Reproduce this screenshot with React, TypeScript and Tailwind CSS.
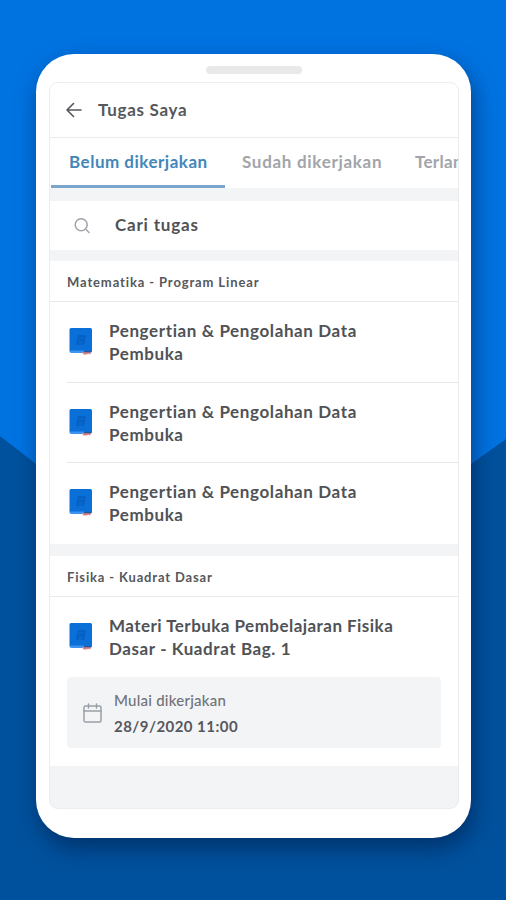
import React from "react";

type TaskProps = {
  title: string;
  subtitle: string;
  titleClass: string;
  subtitleClass: string;
};

const BookIcon: React.FC = () => (
  <svg className="h-[29px] w-6 shrink-0" viewBox="0 0 24 29" fill="none">
    <rect x="0.5" y="1" width="22.5" height="24.5" rx="1.5" fill="#0b6fd8" />
    <path d="M1 23.5h14v2.5H3a2 2 0 0 1-2-2z" fill="#3b95f0" />
    <path d="M8 9h9l-2 9H7z" fill="#0867cd" />
    <path d="M9 9h7l-1 4h-6M8 18l1-5M14 18l1-5" stroke="#075fc0" strokeWidth="1.4" />
    <path d="M13 25h8.5v2.5l-2-.7-2 .7h-3z" fill="#d68484" />
    <path d="M15 24h7v1.3h-7z" fill="#2a5599" />
  </svg>
);

const Task: React.FC<TaskProps> = ({ title, subtitle, titleClass, subtitleClass }) => (
  <div className="flex pl-[19px]">
    <div className="pt-2">
      <BookIcon />
    </div>
    <div className="ml-4 text-[17px] leading-[23px] font-bold whitespace-nowrap text-[#505256]">
      <p className={titleClass}>{title}</p>
      <p className={subtitleClass}>{subtitle}</p>
    </div>
  </div>
);

const SectionTitle: React.FC<{ children: React.ReactNode; className: string }> = ({ children, className }) => (
  <h2 className="flex h-[41px] items-center border-b border-[#e9eaec] pt-[3px] pl-[17px] text-[13px] font-bold whitespace-nowrap text-[#56585c]">
    <span className={className}>{children}</span>
  </h2>
);

const Backdrop: React.FC = () => (
  <svg className="absolute inset-0 h-[900px] w-[506px]" viewBox="0 0 506 900">
    <rect width="506" height="900" fill="#0073e1" />
    <path d="M0 436L36 464L253 620L471 464L506 439V900H0z" fill="#00519d" />
  </svg>
);

const App: React.FC = () => {
  const tasks = [1, 2, 3];

  return (
    <div className="relative h-[900px] w-[506px] overflow-hidden font-['Lato','Open_Sans',sans-serif]">
      <Backdrop />
      <div className="relative mt-[54px] ml-9 h-[784px] w-[435px] rounded-[38px] bg-white pt-3 shadow-[3px_10px_22px_rgba(0,20,60,0.5)]">
        <div className="mx-auto h-2 w-24 rounded-sm bg-[#e9e9e9]" />
        <div className="mt-2 ml-[13px] h-[727px] w-[410px] overflow-hidden rounded-[9px] border border-[#ececee] bg-[#f3f4f6]">
          <header className="flex h-[55px] items-center border-b border-[#ececee] bg-white pl-4">
            <svg className="h-4 w-4" viewBox="0 0 16 16" fill="none" stroke="#55575b" strokeWidth="1.6" strokeLinecap="round" strokeLinejoin="round">
              <path d="M15 8H1M7.5 1.5L1 8L7.5 14.5" />
            </svg>
            <h1 className="ml-4 text-[17px] font-bold tracking-[0.7px] text-[#56585c]">Tugas Saya</h1>
          </header>

          <nav className="flex h-[50px] bg-white text-[17px] font-bold whitespace-nowrap">
            <div className="ml-px w-[174px] shrink-0 border-b-[3px] border-[#7ba5ce] pt-[11px] pl-[18px] text-[#4286ba]">
              <span className="tracking-[0.5px]">Belum dikerjakan</span>
            </div>
            <div className="w-[173px] shrink-0 pt-[11px] pl-[17px] text-[#a1a5aa]">
              <span className="tracking-[0.7px]">Sudah dikerjakan</span>
            </div>
            <div className="shrink-0 pt-[11px] pl-[17px] text-[#a1a5aa]">
              <span className="tracking-[0.3px]">Terlambat</span>
            </div>
          </nav>

          <div className="mt-[13px] flex h-[49px] items-center bg-white pl-6">
            <svg className="h-4 w-4" viewBox="0 0 16 16" fill="none" stroke="#a3a7ad" strokeWidth="1.6" strokeLinecap="round">
              <circle cx="7.2" cy="6.7" r="6" />
              <path d="M12 11.5L15 14.5" />
            </svg>
            <span className="ml-[25px] pb-[2px] text-[17px] font-bold tracking-[0.8px] text-[#505256]">Cari tugas</span>
          </div>

          <section className="mt-[11px] h-[283px] bg-white">
            <SectionTitle className="tracking-[0.88px]">Matematika - Program Linear</SectionTitle>
            {tasks.map((id) => (
              <div key={id} className="group h-[80.5px]">
                <div className="h-[79.5px] pt-[17px]">
                  <Task
                    title="Pengertian & Pengolahan Data"
                    subtitle="Pembuka"
                    titleClass="tracking-[0.61px]"
                    subtitleClass="tracking-[0.6px]"
                  />
                </div>
                <div className="ml-[17px] h-px bg-[#e6e7e9] group-last:hidden" />
              </div>
            ))}
          </section>

          <section className="mt-3 h-[210px] bg-white">
            <SectionTitle className="tracking-[0.85px]">Fisika - Kuadrat Dasar</SectionTitle>
            <div className="h-20 pt-[17px]">
              <Task
                title="Materi Terbuka Pembelajaran Fisika"
                subtitle="Dasar - Kuadrat Bag. 1"
                titleClass="tracking-[0.46px]"
                subtitleClass="tracking-[0.6px]"
              />
            </div>
            <div className="ml-[17px] flex h-[71px] w-[374px] items-center rounded-sm bg-[#f3f4f6] pl-4">
              <svg className="h-5 w-[19px]" viewBox="0 0 19 20" fill="none" stroke="#9ba0a8" strokeWidth="1.5" strokeLinecap="round">
                <rect x="1" y="3" width="17" height="16" rx="1.5" />
                <path d="M1 8h17M5.5 1v4M13.5 1v4" />
              </svg>
              <div className="ml-3 whitespace-nowrap">
                <p className="text-[15px] leading-[26px] font-medium text-[#6f7277]">
                  <span className="tracking-[0.24px]">Mulai dikerjakan</span>
                </p>
                <p className="text-[15px] leading-[26px] font-bold text-[#56585c]">
                  <span className="tracking-[0.46px]">28/9/2020 11:00</span>
                </p>
              </div>
            </div>
          </section>
        </div>
      </div>
    </div>
  );
};

export default App;
